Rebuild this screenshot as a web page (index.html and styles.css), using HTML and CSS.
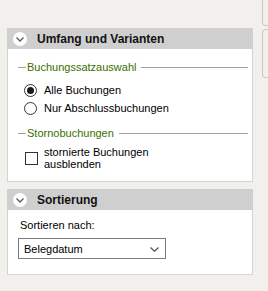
FILE: index.html
```html
<!DOCTYPE html>
<html lang="de">
<head>
  <meta charset="UTF-8" />
  <title>Umfang und Varianten</title>
  <link rel="stylesheet" href="styles.css">
</head>
<body>
  <div class="main">
    <!-- Umfang und Varianten -->
    <div class="panel">
      <div class="panel-header">
        <span class="toggle">
          <svg width="8" height="5" viewBox="0 0 8 5"><path d="M0.5 0.5 L4 4 L7.5 0.5" fill="none" stroke="#5a5a5a" stroke-width="1.3"/></svg>
        </span>
        <span class="panel-title">Umfang und Varianten</span>
      </div>
      <div class="panel-body first">
        <div class="legend">
          <span class="legend-lead"></span>
          <span class="legend-text">Buchungssatzauswahl</span>
          <span class="legend-line"></span>
        </div>
        <div class="options">
          <div class="option">
            <span class="radio checked"></span>
            <span class="option-label">Alle Buchungen</span>
          </div>
          <div class="option">
            <span class="radio"></span>
            <span class="option-label">Nur Abschlussbuchungen</span>
          </div>
        </div>
        <div class="legend storno">
          <span class="legend-lead"></span>
          <span class="legend-text">Stornobuchungen</span>
          <span class="legend-line"></span>
        </div>
        <div class="check-row">
          <span class="checkbox"></span>
          <span class="check-label">stornierte Buchungen<br>ausblenden</span>
        </div>
      </div>
    </div>

    <!-- Sortierung -->
    <div class="panel">
      <div class="panel-header">
        <span class="toggle">
          <svg width="8" height="5" viewBox="0 0 8 5"><path d="M0.5 0.5 L4 4 L7.5 0.5" fill="none" stroke="#5a5a5a" stroke-width="1.3"/></svg>
        </span>
        <span class="panel-title">Sortierung</span>
      </div>
      <div class="panel-body second">
        <div class="field-label">Sortieren nach:</div>
        <div class="select">
          <span class="select-value">Belegdatum</span>
          <svg class="select-arrow" width="9" height="5" viewBox="0 0 9 5"><path d="M0.5 0.5 L4.5 4.3 L8.5 0.5" fill="none" stroke="#555" stroke-width="1.2"/></svg>
        </div>
      </div>
    </div>
  </div>

  <div class="side">
    <div class="side-tab top"></div>
    <div class="side-tab"></div>
  </div>
</body>
</html>
```

FILE: styles.css
```css
body {
  margin: 0;
  height: 291px;
  overflow: hidden;
  display: flex;
  align-items: flex-start;
  background: #f1f0ed;
  font-family: 'Liberation Sans', Arial, sans-serif;
  font-size: 11px;
  color: #000;
}

.main {
  width: 246px;
  margin-left: 7px;
  padding-top: 28px;
}

.panel {
  margin-bottom: 7px;
}

.panel-header {
  height: 21px;
  display: flex;
  align-items: center;
  padding-left: 6px;
  background: #cfcfcf;
}

.toggle {
  width: 14px;
  height: 14px;
  border-radius: 50%;
  background: #fdfdfd;
  display: flex;
  align-items: center;
  justify-content: center;
  margin-right: 10px;
}

.toggle svg {
  margin-top: 1px;
}

.panel-title {
  font-size: 12px;
  font-weight: bold;
  color: #111;
}

.panel-body {
  background: #fff;
  border: 1px solid #d3d3d3;
  border-top: none;
}

.panel-body.first {
  padding: 12px 4px 11px 10px;
}

.panel-body.second {
  padding: 9px 0 15px 10px;
}

/* group legends */
.legend {
  display: flex;
  align-items: center;
  height: 13px;
  line-height: 13px;
}

.legend.storno {
  margin-top: 10px;
}

.legend-lead {
  width: 8px;
  height: 1px;
  background: #a0a0a0;
  margin-right: 1px;
}

.legend-text {
  color: #3b6f00;
  margin-right: 5px;
}

.legend-line {
  flex: 1;
  height: 1px;
  background: #a0a0a0;
}

/* radio options */
.options {
  margin-top: 7px;
}

.option {
  height: 18px;
  display: flex;
  align-items: center;
  padding-left: 6px;
}

.radio {
  width: 11px;
  height: 11px;
  border: 1px solid #333;
  border-radius: 50%;
  background: #fff;
  display: flex;
  align-items: center;
  justify-content: center;
  margin-right: 7px;
}

.radio.checked::after {
  content: '';
  width: 7px;
  height: 7px;
  border-radius: 50%;
  background: #1a1a1a;
}

/* checkbox */
.check-row {
  display: flex;
  align-items: center;
  margin-top: 6px;
  padding-left: 7px;
}

.checkbox {
  width: 11px;
  height: 11px;
  border: 1px solid #333;
  background: #fff;
  margin-right: 6px;
  margin-top: 1px;
}

.check-label {
  line-height: 12px;
}

/* sort select */
.field-label {
  line-height: 13px;
  margin-left: 2px;
}

.select {
  width: 146px;
  height: 19px;
  margin-top: 6px;
  border: 1px solid #7a7a7a;
  display: flex;
  align-items: center;
  justify-content: space-between;
  padding: 0 6px 0 5px;
  box-sizing: content-box;
  width: 135px;
}

.select-arrow {
  margin-top: 1px;
}

/* right edge tabs */
.side {
  margin-left: 9px;
  flex: 1;
}

.side-tab {
  height: 47px;
  border: 1px solid #c9c9c9;
  border-right: none;
  border-radius: 4px 0 0 4px;
  margin-top: 3px;
}

.side-tab.top {
  height: 28px;
  margin-top: -4px;
}
```
